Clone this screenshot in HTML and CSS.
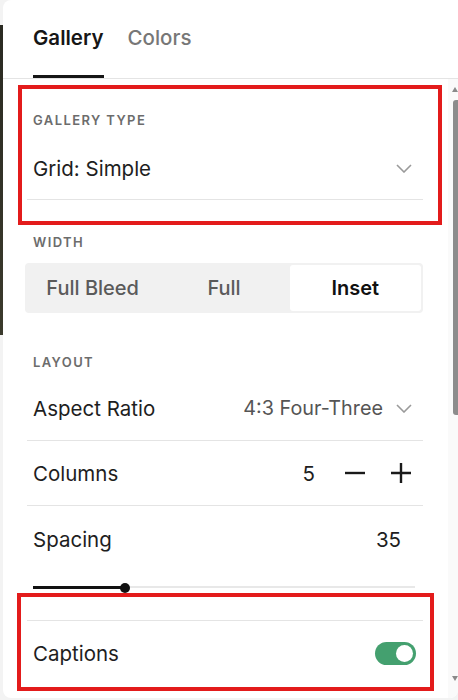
FILE: index.html
```html
<!DOCTYPE html>
<html>
<head>
<meta charset="utf-8">
<link rel="stylesheet" href="styles.css">
</head>
<body>
<div class="panel">
  <div class="tabs">
    <div class="tab active">Gallery</div>
    <div class="tab">Colors</div>
  </div>
  <div class="scrollarea">
    <div class="content">
      <section class="sec sec-type">
        <div class="label">Gallery Type</div>
        <div class="row select-row">
          <span class="value">Grid: Simple</span>
          <svg class="chev" viewBox="0 0 16 9" width="16" height="9"><path d="M1 1l7 7 7-7" fill="none" stroke="#9a9a9a" stroke-width="1.6"/></svg>
        </div>
        <div class="annot annot-1"></div>
      </section>

      <div class="label label-width">Width</div>
      <div class="segmented">
        <div class="seg">Full Bleed</div>
        <div class="seg">Full</div>
        <div class="seg selected">Inset</div>
      </div>

      <div class="label label-layout">Layout</div>
      <div class="row line-row aspect-row">
        <span class="value">Aspect Ratio</span>
        <span class="right">
          <span class="muted">4:3 Four-Three</span>
          <svg class="chev" viewBox="0 0 16 9" width="16" height="9"><path d="M1 1l7 7 7-7" fill="none" stroke="#9a9a9a" stroke-width="1.6"/></svg>
        </span>
      </div>
      <div class="row line-row">
        <span class="value">Columns</span>
        <span class="right stepper">
          <span class="num">5</span>
          <svg viewBox="0 0 22 22" width="22" height="22"><path d="M1 11h20" stroke="#1a1a1a" stroke-width="2.4"/></svg>
          <svg viewBox="0 0 22 22" width="22" height="22"><path d="M1 11h20M11 1v20" stroke="#1a1a1a" stroke-width="2.4"/></svg>
        </span>
      </div>
      <div class="spacing">
        <div class="row spacing-row">
          <span class="value">Spacing</span>
          <span class="num">35</span>
        </div>
        <div class="slider">
          <div class="fill" style="width:92px"></div>
          <div class="thumb" style="left:92px"></div>
        </div>
      </div>
      <section class="sec sec-captions">
        <div class="row captions-row">
          <span class="value">Captions</span>
          <span class="toggle"><span class="knob"></span></span>
        </div>
        <div class="annot annot-2"></div>
      </section>
    </div>
    <div class="scrollbar">
      <div class="arrow up"></div>
      <div class="thumbbar"></div>
      <div class="arrow down"></div>
    </div>
  </div>
</div>
</body>
</html>
```

FILE: styles.css
```css
html, body {
  margin: 0;
  padding: 0;
}
body {
  width: 458px;
  height: 700px;
  overflow: hidden;
  font-family: Inter, "Noto Sans", "Liberation Sans", sans-serif;
  color: #1e1e1e;
  background-color: #f3f3f3;
  background-image: linear-gradient(#2a2a22, #3b3a2c);
  background-repeat: no-repeat;
  background-size: 3px 310px;
  background-position: 0 25px;
}
.panel {
  margin-left: 3px;
  height: 698px;
  background: #fff;
  border-radius: 8px 0 8px 8px;
  display: flex;
  flex-direction: column;
  overflow: hidden;
}
.tabs {
  height: 78px;
  border-bottom: 1px solid #e4e4e4;
  display: flex;
  padding-left: 30px;
  gap: 24px;
  flex-shrink: 0;
}
.tab {
  font-size: 20.5px;
  font-weight: 500;
  color: #777;
  display: flex;
  align-items: center;
  height: 75px;
  border-bottom: 3px solid transparent;
}
.tab.active {
  color: #161616;
  font-weight: 600;
  border-bottom-color: #161616;
}
.scrollarea {
  flex: 1;
  display: flex;
  min-height: 0;
}
.content {
  flex: 1;
  padding: 0 25px 0 24px;
}
.sec {
  position: relative;
}
.annot {
  position: absolute;
  border: 4px solid #e31b1b;
  pointer-events: none;
}
.annot-1 {
  left: -9px;
  right: -19px;
  top: -27px;
  bottom: -25px;
}
.annot-2 {
  left: -10px;
  right: -11px;
  top: -28px;
  bottom: -6px;
}
.label {
  font-size: 13px;
  font-weight: 600;
  letter-spacing: 1.4px;
  text-transform: uppercase;
  color: #6c6c6c;
  line-height: 16px;
  padding-left: 6px;
}
.sec-type {
  margin-top: 33px;
}
.row {
  display: flex;
  align-items: center;
  justify-content: space-between;
  padding-left: 6px;
  font-size: 20.5px;
  padding-right: 11px;
}
.select-row {
  margin-top: 9px;
  height: 62px;
  border-bottom: 1px solid #e4e4e4;
}
.chev {
  display: block;
}
.label-width {
  margin-top: 34px;
}
.segmented {
  margin-top: 13px;
  height: 46px;
  padding: 2px;
  background: #f1f1f1;
  border-radius: 4px;
  display: flex;
  margin-left: -2px;
}
.seg {
  flex: 1;
  display: flex;
  align-items: center;
  justify-content: center;
  font-size: 20px;
  font-weight: 500;
  color: #5a5a5a;
  border-radius: 3px;
}
.seg.selected {
  background: #fff;
  color: #111;
  font-weight: 600;
}
.label-layout {
  margin-top: 41px;
}
.line-row {
  height: 64px;
  border-bottom: 1px solid #e4e4e4;
}
.aspect-row {
  margin-top: 6px;
}
.right {
  display: flex;
  align-items: center;
  gap: 13px;
}
.muted {
  color: #555;
  font-size: 19.8px;
}
.stepper {
  gap: 0;
}
.stepper .num {
  margin-right: 29px;
}
.stepper svg {
  display: block;
}
.stepper svg + svg {
  margin-left: 24px;
}
.spacing {
  padding-top: 20px;
  border-bottom: 1px solid #e4e4e4;
  padding-bottom: 28px;
}
.spacing-row {
  height: 26px;
  padding-right: 22px;
}
.slider {
  position: relative;
  margin: 30px 8px 0 6px;
  height: 10px;
  background: linear-gradient(#e8e8e8, #e8e8e8) no-repeat 0 50% / 100% 2px;
}
.fill {
  position: absolute;
  left: 0;
  top: 4px;
  height: 3px;
  background: #111;
}
.thumb {
  position: absolute;
  top: 0.5px;
  width: 10px;
  height: 10px;
  margin-left: -5px;
  border-radius: 50%;
  background: #111;
}
.captions-row {
  height: 64px;
  padding-right: 7px;
}
.toggle {
  width: 41px;
  height: 23px;
  border-radius: 12px;
  background: #44a06f;
  position: relative;
}
.knob {
  position: absolute;
  right: 3px;
  top: 3px;
  width: 17px;
  height: 17px;
  border-radius: 50%;
  background: #fff;
}
.scrollbar {
  width: 10px;
  display: flex;
  flex-direction: column;
  align-items: flex-end;
  background: #fafafa;
}
.arrow {
  width: 0;
  height: 0;
  border-left: 3px solid transparent;
  border-right: 3px solid transparent;
}
.arrow.up {
  margin-top: 8px;
  border-bottom: 5px solid #8a8a8a;
}
.arrow.down {
  margin-top: auto;
  margin-bottom: 17px;
  border-top: 5px solid #8a8a8a;
}
.thumbbar {
  margin-top: 8px;
  width: 5px;
  height: 315px;
  border-radius: 3px 0 0 3px;
  background: #8c8c8c;
}
```
